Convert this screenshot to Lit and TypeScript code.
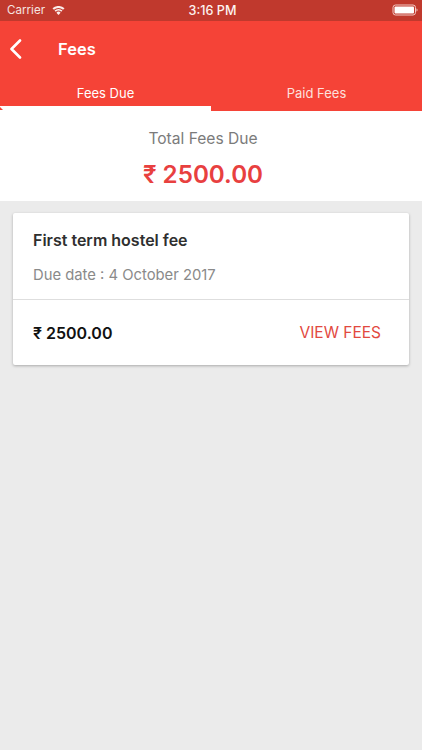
import { LitElement, html, css } from "lit";
import { customElement } from "lit/decorators.js";

@customElement("app-root")
export class AppRoot extends LitElement {
  static styles = css`
    :host { display: block; width: 422px; height: 750px; background: #ebebeb; font-family: Inter, Roboto, sans-serif; overflow: hidden; }
    .status { height: 21px; box-sizing: border-box; background: #c0392d; color: #f5e3e0; display: grid; grid-template-columns: 1fr auto 1fr; align-items: center; font-size: 11.600px; padding: 0 4px 1px 7px; }
    .status-left { display: flex; align-items: center; gap: 7px; }
    .status-left svg { display: block; }
    .status-time { font-weight: 500; font-size: 12.600px; color: #fdf3f1; }
    .status-right { display: flex; justify-content: flex-end; }
    .header { background: #f54337; color: #fff; height: 90px; display: flex; flex-direction: column; }
    .bar { height: 56px; display: flex; align-items: center; padding-left: 9px; }
    .bar svg { display: block; }
    .title { margin-left: 35px; font-size: 16.500px; font-weight: 600; }
    .tabs { flex: 1; display: grid; grid-template-columns: 1fr 1fr; }
    .tab { display: flex; align-items: flex-start; justify-content: center; padding-top: 7px; font-size: 13px; line-height: 18px; color: #fde0dd; position: relative; }
    .tab.on { color: #fff; border-bottom: 5px solid #fff; }
    .notch { position: absolute; left: 0; bottom: -4px; width: 0; height: 0; border-left: 3px solid #f54337; border-top: 3px solid transparent; }
    .total { background: #fff; height: 90px; display: flex; flex-direction: column; align-items: center; padding-right: 16px; }
    .total-label { margin-top: 18px; font-size: 15.600px; line-height: 19px; color: #7b7b7b; }
    .total-value { margin-top: 12px; font-size: 24.200px; line-height: 30px; font-weight: 600; color: #e8403f; }
    .card { margin: 12px 13px 0; background: #fff; border-radius: 2px; box-shadow: 0 1px 3px rgba(0,0,0,.28); height: 152px; display: flex; flex-direction: column; }
    .card-top { height: 87px; padding: 17px 20px 0; box-sizing: border-box; border-bottom: 1px solid #dedede; }
    .name { font-size: 16px; line-height: 20px; font-weight: 600; color: #2f2f2f; }
    .due { margin-top: 16px; font-size: 14.800px; line-height: 18px; color: #8a8a8a; }
    .card-bottom { flex: 1; display: flex; align-items: center; justify-content: space-between; padding: 0 28px 0 20px; }
    .amount { font-size: 16px; font-weight: 600; color: #111; }
    .view { font-size: 15.500px; color: #e2493f; }
  `;

  render() {
    return html`
      <div class="status">
        <div class="status-left">
          <span>Carrier</span>
          <svg width="13" height="9" viewBox="0 0 14 10" fill="#fbeeec"><path d="M7 10 4.700 7.400a3.200 3.200 0 0 1 4.600 0Z"/><path d="M3.900 6.500 2.600 5a6.400 6.400 0 0 1 8.800 0L10.100 6.500a4.600 4.600 0 0 0-6.200 0Z"/><path d="M1.900 4.200.3 2.600a9.800 9.800 0 0 1 13.400 0L12.100 4.200a7.600 7.600 0 0 0-10.200 0Z"/></svg>
        </div>
        <div class="status-time">3:16 PM</div>
        <div class="status-right">
          <svg width="26" height="12" viewBox="0 0 26 12"><rect x="1" y="1" width="22.500" height="10" rx="2.500" fill="none" stroke="#f3c9c4" stroke-width="1"/><rect x="2.500" y="2.500" width="19.500" height="7" rx="1" fill="#fff"/><path d="M24.500 4.500c.8.200 1 .8 1 1.500s-.2 1.300-1 1.500Z" fill="#f3c9c4"/></svg>
        </div>
      </div>
      <div class="header">
        <div class="bar">
          <svg width="14" height="20" viewBox="0 0 14 20" fill="none" stroke="#fff" stroke-width="2.600" stroke-linecap="round" stroke-linejoin="round"><path d="M11 1.500 2.500 10l8.500 8.500"/></svg>
          <div class="title">Fees</div>
        </div>
        <div class="tabs">
          <div class="tab on">Fees Due<span class="notch"></span></div>
          <div class="tab">Paid Fees</div>
        </div>
      </div>
      <div class="total">
        <div class="total-label">Total Fees Due</div>
        <div class="total-value">₹ 2500.00</div>
      </div>
      <div class="card">
        <div class="card-top">
          <div class="name">First term hostel fee</div>
          <div class="due">Due date : 4 October 2017</div>
        </div>
        <div class="card-bottom">
          <div class="amount">₹ 2500.00</div>
          <div class="view">VIEW FEES</div>
        </div>
      </div>
    `;
  }
}
